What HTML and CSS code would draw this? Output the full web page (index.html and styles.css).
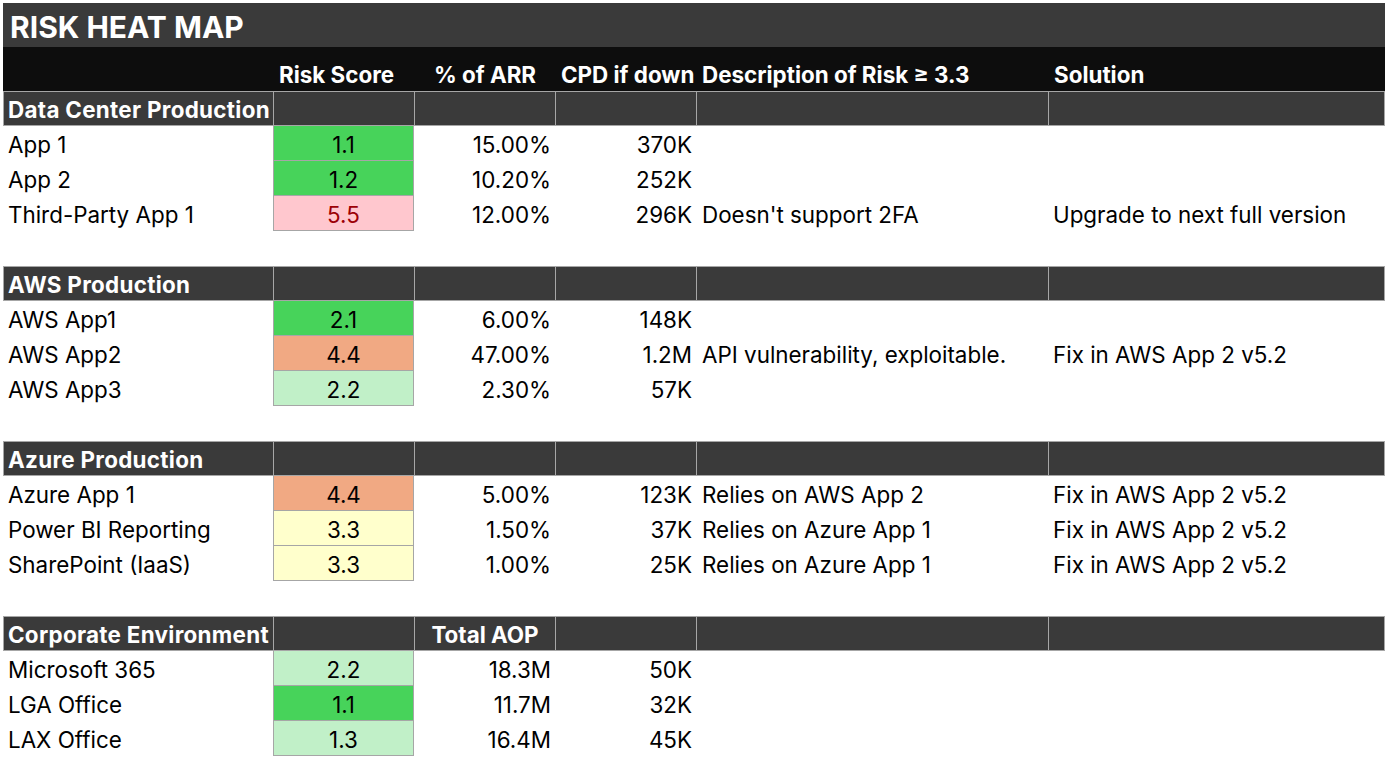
FILE: index.html
```html
<!DOCTYPE html>
<html lang="en">
<head>
<meta charset="utf-8">
<title>Risk Heat Map</title>
<link rel="stylesheet" href="styles.css">
</head>
<body>
<div class="sheet">
  <div class="title">RISK HEAT MAP</div>
  <div class="grid head">
    <div class="cell"></div>
    <div class="cell">Risk Score</div>
    <div class="cell center">% of ARR</div>
    <div class="cell">CPD if down</div>
    <div class="cell">Description of Risk ≥ 3.3</div>
    <div class="cell">Solution</div>
  </div>

  <div class="grid section">
    <div class="cell label">Data Center Production</div><div class="cell"></div><div class="cell"></div><div class="cell"></div><div class="cell"></div><div class="cell"></div>
  </div>
  <div class="grid row"><div class="cell">App 1</div><div class="cell score green">1.1</div><div class="cell num">15.00%</div><div class="cell num">370K</div><div class="cell desc"></div><div class="cell"></div></div>
  <div class="grid row"><div class="cell">App 2</div><div class="cell score green">1.2</div><div class="cell num">10.20%</div><div class="cell num">252K</div><div class="cell desc"></div><div class="cell"></div></div>
  <div class="grid row"><div class="cell">Third-Party App 1</div><div class="cell score red">5.5</div><div class="cell num">12.00%</div><div class="cell num">296K</div><div class="cell desc">Doesn't support 2FA</div><div class="cell">Upgrade to next full version</div></div>
  <div class="gap"></div>

  <div class="grid section">
    <div class="cell label">AWS Production</div><div class="cell"></div><div class="cell"></div><div class="cell"></div><div class="cell"></div><div class="cell"></div>
  </div>
  <div class="grid row"><div class="cell">AWS App1</div><div class="cell score green">2.1</div><div class="cell num">6.00%</div><div class="cell num">148K</div><div class="cell desc"></div><div class="cell"></div></div>
  <div class="grid row"><div class="cell">AWS App2</div><div class="cell score orange">4.4</div><div class="cell num">47.00%</div><div class="cell num">1.2M</div><div class="cell desc">API vulnerability, exploitable.</div><div class="cell">Fix in AWS App 2 v5.2</div></div>
  <div class="grid row"><div class="cell">AWS App3</div><div class="cell score lightgreen">2.2</div><div class="cell num">2.30%</div><div class="cell num">57K</div><div class="cell desc"></div><div class="cell"></div></div>
  <div class="gap"></div>

  <div class="grid section">
    <div class="cell label">Azure Production</div><div class="cell"></div><div class="cell"></div><div class="cell"></div><div class="cell"></div><div class="cell"></div>
  </div>
  <div class="grid row"><div class="cell">Azure App 1</div><div class="cell score orange">4.4</div><div class="cell num">5.00%</div><div class="cell num">123K</div><div class="cell desc">Relies on AWS App 2</div><div class="cell">Fix in AWS App 2 v5.2</div></div>
  <div class="grid row"><div class="cell">Power BI Reporting</div><div class="cell score yellow">3.3</div><div class="cell num">1.50%</div><div class="cell num">37K</div><div class="cell desc">Relies on Azure App 1</div><div class="cell">Fix in AWS App 2 v5.2</div></div>
  <div class="grid row"><div class="cell">SharePoint (IaaS)</div><div class="cell score yellow">3.3</div><div class="cell num">1.00%</div><div class="cell num">25K</div><div class="cell desc">Relies on Azure App 1</div><div class="cell">Fix in AWS App 2 v5.2</div></div>
  <div class="gap"></div>

  <div class="grid section">
    <div class="cell label">Corporate Environment</div><div class="cell"></div><div class="cell center">Total AOP</div><div class="cell"></div><div class="cell"></div><div class="cell"></div>
  </div>
  <div class="grid row"><div class="cell">Microsoft 365</div><div class="cell score lightgreen">2.2</div><div class="cell num">18.3M</div><div class="cell num">50K</div><div class="cell desc"></div><div class="cell"></div></div>
  <div class="grid row"><div class="cell">LGA Office</div><div class="cell score green">1.1</div><div class="cell num">11.7M</div><div class="cell num">32K</div><div class="cell desc"></div><div class="cell"></div></div>
  <div class="grid row"><div class="cell">LAX Office</div><div class="cell score lightgreen">1.3</div><div class="cell num">16.4M</div><div class="cell num">45K</div><div class="cell desc"></div><div class="cell"></div></div>
</div>
</body>
</html>
```
FILE: styles.css
```css
html, body {
  margin: 0;
  padding: 0;
  background: #ffffff;
}

body {
  padding: 3px 3px 0 3px;
  font-family: Inter, "Open Sans", "Liberation Sans", sans-serif;
  color: #000000;
}

.sheet {
  width: 1382px;
  display: flex;
  flex-direction: column;
  font-size: 22.4px;
}

.title {
  height: 44px;
  box-sizing: border-box;
  background: #3a3a3a;
  color: #ffffff;
  font-size: 30px;
  font-weight: 700;
  line-height: 36px;
  padding: 0 7px 2px 7px;
  display: flex;
  align-items: flex-end;
  white-space: nowrap;
}

.grid {
  display: grid;
  grid-template-columns: 270px 141px 141px 141px 352px 337px;
  box-sizing: border-box;
}

.cell {
  box-sizing: border-box;
  display: flex;
  align-items: flex-end;
  padding: 0 5px 3px 5px;
  line-height: 26px;
  white-space: nowrap;
  overflow: hidden;
  min-width: 0;
}

.head {
  height: 44px;
  background: #0d0d0d;
  color: #ffffff;
  font-weight: 700;
}

.head .cell {
  padding-left: 6px;
}

.section {
  height: 35px;
  background: #3a3a3a;
  color: #ffffff;
  font-weight: 700;
  border-top: 1px solid #a6a6a6;
  border-bottom: 1px solid #a6a6a6;
  border-right: 1px solid #a6a6a6;
}

.section .cell {
  border-left: 1px solid #a6a6a6;
  padding-bottom: 2px;
}

.section .cell.label {
  padding-left: 4px;
  letter-spacing: 0.3px;
}

.row {
  height: 35px;
}

.gap {
  height: 35px;
}

.center {
  justify-content: center;
}

.num {
  justify-content: flex-end;
  padding-right: 4px;
}

.desc {
  padding-left: 6px;
}

.score {
  justify-content: center;
  border-left: 1px solid #a6a6a6;
  border-right: 1px solid #a6a6a6;
  border-bottom: 1px solid #a6a6a6;
  padding-bottom: 2px;
}

.green { background: #47d35a; }
.lightgreen { background: #c1f0c8; }
.red { background: #ffc7ce; color: #9c0006; }
.orange { background: #f1a983; }
.yellow { background: #ffffcc; }
```
